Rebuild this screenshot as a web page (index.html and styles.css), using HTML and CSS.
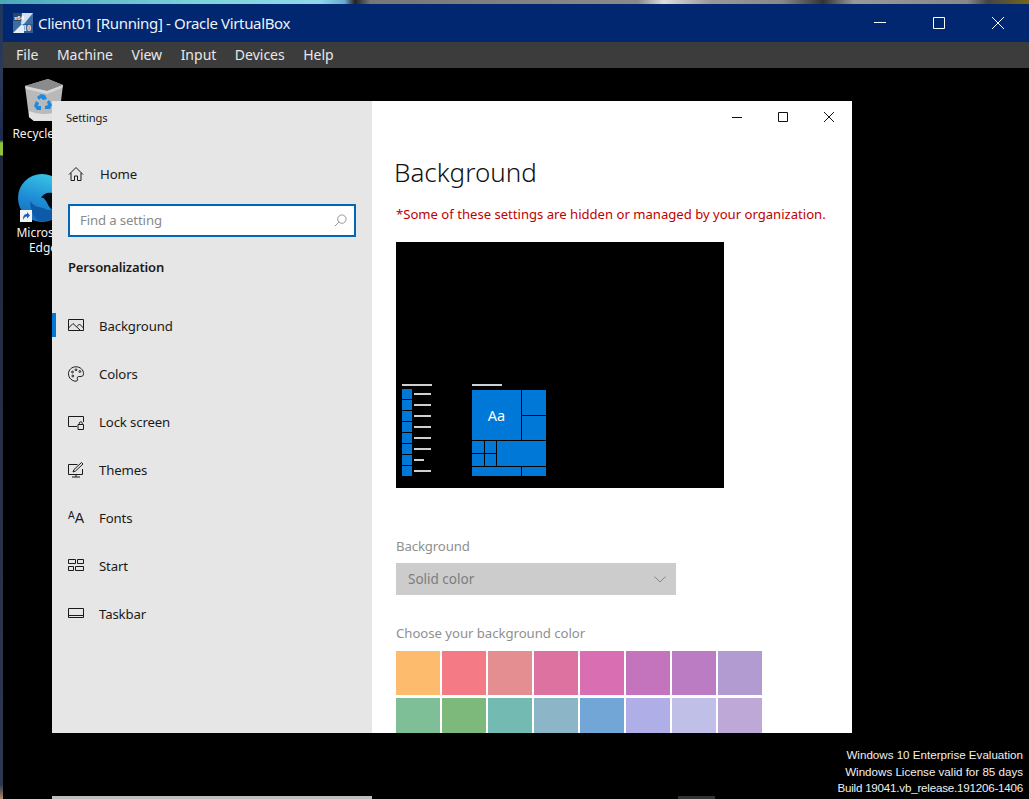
FILE: index.html
```html
<!DOCTYPE html>
<html lang="en">
<head>
<meta charset="utf-8">
<title>Client01 [Running] - Oracle VirtualBox</title>
<link rel="stylesheet" href="styles.css">
</head>
<body>
<div class="wall-top"></div>
<div class="vbox">
  <header class="vbox-title">
    <svg class="vbox-logo" viewBox="0 0 20 20">
      <rect width="20" height="20" fill="#3d6da3"/>
      <path d="M0 0h10v8H0z" fill="#27486e"/>
      <path d="M9 0h11L11 11H8z" fill="#cfe0f0"/>
      <path d="M0 20l9-9 3 3v6z" fill="#e4edf6"/>
      <path d="M11 11h9v9h-9z" fill="#2f5c92"/>
      <text x="1" y="7" class="vbox-logo-a">x64</text>
      <text x="10" y="18" class="vbox-logo-b">10</text>
    </svg>
    <span class="vbox-name">Client01 [Running] - Oracle VirtualBox</span>
    <div class="vbox-controls">
      <button class="vbox-btn" aria-label="Minimize"><svg viewBox="0 0 12 12"><path d="M0 5.500h12"/></svg></button>
      <button class="vbox-btn" aria-label="Maximize"><svg viewBox="0 0 12 12"><path d="M.5.500h11v11H.5z"/></svg></button>
      <button class="vbox-btn" aria-label="Close"><svg viewBox="0 0 12 12"><path d="M0 0l12 12M12 0L0 12"/></svg></button>
    </div>
  </header>
  <nav class="vbox-menu">
    <span>File</span><span>Machine</span><span>View</span><span>Input</span><span>Devices</span><span>Help</span>
  </nav>
  <main class="guest">
    <div class="desk-icon desk-recycle">
      <svg class="recycle-svg" viewBox="0 0 40 44">
        <path d="M1 8L24 1l15 6-4 32-6 4H10l-5-4z" fill="#b9b9b9"/>
        <path d="M1 8L24 1l15 6-16 6z" fill="#8b8b8b"/>
        <path d="M1 8l22 5 16-6-1 3-15 6L2 11z" fill="#d6d6d6"/>
        <path d="M5 33c10 4 20 4 31 0l-1 6-6 4H10l-5-4z" fill="#e2e2e2"/>
        <path d="M13 19l4-3 4 1 2 4-4 1-2-2-2 2zM25 22l3 5-2 4-5 0v-3l3-1-1-3zM12 23l3 2-1 3 3 0v4h-4l-3-4z" fill="#1d8ae0"/>
      </svg>
      <span class="desk-label">Recycle Bin</span>
    </div>
    <div class="desk-icon desk-edge">
      <svg class="edge-svg" viewBox="0 0 48 48">
        <defs>
          <linearGradient id="edgeA" x1="0.5" y1="0" x2="0.2" y2="1">
            <stop offset="0" stop-color="#36c0e4"/>
            <stop offset=".5" stop-color="#1f8ed6"/>
            <stop offset="1" stop-color="#1668b8"/>
          </linearGradient>
        </defs>
        <circle cx="24" cy="24" r="24" fill="url(#edgeA)"/>
        <path d="M12 27c4 6 9 6 13 7 4 2 7 3 9 1l8-6-4 14c-4 3-9 4-14 4-6 0-11-6-12-20z" fill="#0f5aa8"/>
        <path d="M23 24c2-4 6-6 11-5l8 4-8 12c-3-1-4-5-6-8-2-3-3-4-5-3z" fill="#040a14"/>
      </svg>
      <span class="shortcut"><svg viewBox="0 0 12 12"><path d="M3 10c0-4 1-6 4-6V2l3 3.500-3 3V6.500C5 6.500 4 8 3 10z"/></svg></span>
      <span class="desk-label">Microsoft Edge</span>
    </div>

    <section class="settings">
      <aside class="sidebar">
        <div class="settings-title">Settings</div>
        <a class="nav-row home-row">
          <svg class="ico" viewBox="0 0 16 16"><path d="M1 8.500L8 1.500l7 7M3 7v7.500h3.500V10h3v4.500H13V7"/></svg>
          <span>Home</span>
        </a>
        <div class="search">
          <span class="search-hint">Find a setting</span>
          <svg class="search-ico" viewBox="0 0 14 14"><circle cx="8.500" cy="5.500" r="4.500"/><path d="M5.300 8.700L.8 13.200"/></svg>
        </div>
        <h2 class="group">Personalization</h2>
        <a class="nav-row active">
          <svg class="ico" viewBox="0 0 16 16"><path d="M.5 1.500h15v11H.5zM.5 10l4.500-4.500 7.500 7M9 8.500l2.500-2.500 4 4"/></svg>
          <span>Background</span>
        </a>
        <a class="nav-row">
          <svg class="ico" viewBox="0 0 16 16"><path d="M8 .8c4.200 0 7.500 3 7.500 6.800 0 4.400-4.500 2-6 3.500-1.200 1.200 1 2.400-.3 3.600C8 15.800 5 15 3 13.300 1.300 11.800.5 9.800.5 7.800.5 3.800 3.800.8 8 .8z"/><circle cx="4.500" cy="6" r=".9"/><circle cx="8" cy="3.800" r=".9"/><circle cx="11.800" cy="5.500" r=".9"/><circle cx="4.800" cy="10" r=".9"/></svg>
          <span>Colors</span>
        </a>
        <a class="nav-row">
          <svg class="ico" viewBox="0 0 16 16"><path d="M9 12.500H.5v-10h15V8M10 10.500h5.500v5H10zM11.300 10.500V9.300a1.500 1.500 0 0 1 3 0v1.200"/></svg>
          <span>Lock screen</span>
        </a>
        <a class="nav-row">
          <svg class="ico" viewBox="0 0 16 16"><path d="M9.500 2.500H.5v10h14V7M4 15h8M8 12.500V15M5 10l1-2.500 7.500-7 1.500 1.500-7.500 7z"/></svg>
          <span>Themes</span>
        </a>
        <a class="nav-row">
          <span class="font-ico"><span class="font-a">A</span><span class="font-b">A</span></span>
          <span>Fonts</span>
        </a>
        <a class="nav-row">
          <svg class="ico" viewBox="0 0 16 16"><path d="M.5 1.500h7v4h-7zM9.500 1.500h6v4h-6zM.5 8.500h5v4h-5zM7.500 8.500h8v4h-8z"/></svg>
          <span>Start</span>
        </a>
        <a class="nav-row">
          <svg class="ico" viewBox="0 0 16 16"><path d="M.5 2.500h15v9H.5zM.5 9.500h15"/></svg>
          <span>Taskbar</span>
        </a>
      </aside>
      <div class="content">
        <div class="win-controls">
          <button class="win-btn" aria-label="Minimize"><svg viewBox="0 0 10 10"><path d="M0 5.500h10"/></svg></button>
          <button class="win-btn" aria-label="Maximize"><svg viewBox="0 0 10 10"><path d="M.5.500h9v9h-9z"/></svg></button>
          <button class="win-btn" aria-label="Close"><svg viewBox="0 0 10 10"><path d="M0 0l10 10M10 0L0 10"/></svg></button>
        </div>
        <h1 class="page-title">Background</h1>
        <p class="policy">*Some of these settings are hidden or managed by your organization.</p>
        <div class="preview">
          <div class="pv-start">
            <div class="pv-head"></div>
            <ul class="pv-list">
              <li><i></i><b></b></li><li><i></i><b></b></li><li><i></i><b></b></li><li><i></i><b></b></li>
              <li><i></i><b></b></li><li><i></i><b></b></li><li><i></i><b class="short"></b></li><li><i></i><b></b></li>
            </ul>
          </div>
          <div class="pv-tiles-col">
            <div class="pv-head"></div>
            <div class="pv-tiles">
              <div class="t-aa">Aa</div><div class="t-r1"></div><div class="t-r2"></div>
              <div class="t-s1"></div><div class="t-s2"></div><div class="t-m"></div>
              <div class="t-s3"></div><div class="t-s4"></div>
              <div class="t-b1"></div><div class="t-b2"></div>
            </div>
          </div>
        </div>
        <div class="field-label">Background</div>
        <div class="select">
          <span>Solid color</span>
          <svg class="chev" viewBox="0 0 12 7"><path d="M.5.500L6 6l5.500-5.500"/></svg>
        </div>
        <div class="field-label second">Choose your background color</div>
        <div class="swatches">
          <i class="c1"></i><i class="c2"></i><i class="c3"></i><i class="c4"></i><i class="c5"></i><i class="c6"></i><i class="c7"></i><i class="c8"></i>
          <i class="c9"></i><i class="c10"></i><i class="c11"></i><i class="c12"></i><i class="c13"></i><i class="c14"></i><i class="c15"></i><i class="c16"></i>
        </div>
      </div>
    </section>

    <div class="watermark">
      <div>Windows 10 Enterprise Evaluation</div>
      <div>Windows License valid for 85 days</div>
      <div class="wm-build">Build 19041.vb_release.191206-1406</div>
    </div>
    <div class="ghost-a"></div>
    <div class="ghost-b"></div>
  </main>
</div>
</body>
</html>
```

FILE: styles.css
```css
* { box-sizing: border-box; }
html, body { margin: 0; height: 100%; }
body {
  width: 1029px;
  height: 799px;
  overflow: hidden;
  display: flex;
  flex-direction: column;
  font-family: "Noto Sans", "Open Sans", sans-serif;
  background: linear-gradient(180deg, #1d3560 0, #2b3a55 68px, #1b2b50 140px, #8fc23a 143px, #8fc23a 155px, #20283c 156px, #2c3850 760px, #2c3850 785px, #b08a6a 799px);
}
.wall-top {
  height: 4px;
  flex: none;
  background: linear-gradient(90deg, #4aa8b8 0, #7fd3dc 20%, #8fd8ea 31%, #6aa8cc 33.500%, #222 34.500%, #777 36%, #8a8a8a 62%, #ddd 64.500%, #999 69%, #888 76%, #333 80%, #999 83%, #888 94%, #444 96%, #77661a 100%);
}
.vbox {
  flex: 1;
  min-height: 0;
  margin-left: 3px;
  display: flex;
  flex-direction: column;
}
.vbox-title {
  height: 38px;
  flex: none;
  display: flex;
  align-items: center;
  background: #00276f;
  color: #fff;
  padding-left: 10px;
}
.vbox-logo { width: 20px; height: 20px; margin-right: 5px; }
.vbox-logo-a { font: bold 6px "Liberation Sans", sans-serif; fill: #fff; }
.vbox-logo-b { font: bold 8px "Liberation Serif", serif; fill: #fff; }
.vbox-name { font-size: 15px; letter-spacing: -.35px; white-space: nowrap; color: #eef2f8; }
.vbox-controls { margin-left: auto; display: flex; padding-right: 2px; }
.vbox-btn {
  width: 59px;
  height: 38px;
  padding: 0;
  border: 0;
  background: none;
  display: flex;
  align-items: center;
  justify-content: center;
}
.vbox-btn svg { width: 12px; height: 12px; fill: none; stroke: #fff; stroke-width: 1; }
.vbox-menu {
  height: 26px;
  flex: none;
  display: flex;
  align-items: center;
  gap: 18.500px;
  padding: 0 0 2px 13px;
  background: #3c3c3c;
  color: #e8e8e8;
  font-size: 14px;
}
.guest { flex: 1; position: relative; background: #000; overflow: hidden; }

.desk-icon {
  position: absolute;
  width: 76px;
  display: flex;
  flex-direction: column;
  align-items: center;
  color: #f2f2f2;
  font-size: 12px;
  line-height: 15px;
  text-align: center;
}
.desk-recycle { left: 3px; top: 10px; }
.recycle-svg { width: 40px; height: 44px; margin-left: 0; margin-bottom: 4px; }
.desk-edge { left: 2px; top: 106px; }
.edge-svg { width: 48px; height: 48px; margin: 0 0 3px -2px; }
.desk-edge .desk-label { width: 60px; }
.shortcut {
  position: absolute;
  left: 15px;
  top: 36px;
  width: 12px;
  height: 12px;
  background: #f4f4f4;
}
.shortcut svg { display: block; fill: #1c5fc0; }

.settings {
  position: absolute;
  left: 49px;
  top: 33px;
  width: 800px;
  height: 632px;
  display: flex;
  overflow: hidden;
  font-size: 13.200px;
  letter-spacing: -.13px;
  color: #1a1a1a;
}
.sidebar { width: 320px; flex: none; background: #e6e6e6; }
.settings-title { height: 32px; padding-left: 14px; font-size: 11.200px; line-height: 33px; }
.nav-row {
  position: relative;
  height: 48px;
  display: flex;
  align-items: center;
  padding-left: 16px;
}
.nav-row .ico {
  width: 16px;
  height: 16px;
  margin-right: 15px;
  fill: none;
  stroke: #1a1a1a;
  stroke-width: 1;
  flex: none;
}
.home-row { margin-top: 17px; }
.home-row .ico { margin-right: 16px; }
.active::before {
  content: "";
  position: absolute;
  left: 0;
  top: 11px;
  width: 4px;
  height: 24px;
  background: #0078d7;
}
.search {
  height: 33px;
  margin: 6px 16px 0;
  padding: 0 7px 2px 10px;
  border: 2px solid #0067b8;
  background: #fff;
  display: flex;
  align-items: center;
  justify-content: space-between;
  color: #8a8a8a;
}
.search-ico { width: 13px; height: 13px; margin-top: 2px; fill: none; stroke: #8f8f8f; stroke-width: 1; }
.group { margin: 20px 16px 25px; font-size: 13px; line-height: 20px; font-weight: 600; }
.font-ico {
  width: 16px;
  margin-right: 15px;
  display: flex;
  align-items: flex-end;
  justify-content: center;
  font-family: "Liberation Sans", sans-serif;
  letter-spacing: 0;
  line-height: 1;
}
.font-a { font-size: 10px; margin-bottom: 4px; }
.font-b { font-size: 14px; }

.content { flex: 1; min-width: 0; background: #fff; padding-left: 24px; }
.win-controls { display: flex; justify-content: flex-end; height: 32px; }
.win-btn {
  width: 46px;
  height: 32px;
  padding: 0;
  border: 0;
  background: none;
  display: flex;
  align-items: center;
  justify-content: center;
}
.win-btn svg { width: 10px; height: 10px; fill: none; stroke: #111; stroke-width: 1; }
.page-title {
  margin: 18px 0 0 -2px;
  font-size: 26px;
  font-weight: 300;
  letter-spacing: 0;
  line-height: 42px;
  color: #111;
}
.policy { margin: 11px 0 0; font-size: 13.100px; letter-spacing: 0; line-height: 20px; color: #c00000; white-space: nowrap; }
.preview {
  width: 328px;
  height: 246px;
  margin-top: 18px;
  background: #000;
  display: flex;
  align-items: flex-end;
  padding: 0 0 12px 6px;
}
.pv-head { height: 2px; width: 30px; background: #d0d0d0; margin-bottom: 4px; }
.pv-start { width: 70px; }
.pv-start .pv-head { margin-bottom: 3px; }
.pv-list { list-style: none; margin: 0; padding: 0; }
.pv-list li { display: flex; align-items: center; height: 11px; padding-bottom: 1px; }
.pv-list li:last-child { height: 10px; padding-bottom: 0; }
.pv-list i { width: 10px; height: 10px; background: #0078d7; margin-right: 2px; }
.pv-list b { width: 17px; height: 2px; background: #d0d0d0; }
.pv-list b.short { width: 10px; }
.pv-tiles {
  width: 74px;
  display: grid;
  grid-template-columns: 12px 11px 24px 24px;
  grid-template-rows: 25px 24px 12px 12px 9px;
  gap: 1px;
}
.pv-tiles div { background: #0078d7; }
.t-aa {
  grid-column: 1 / 4;
  grid-row: 1 / 3;
  display: flex;
  align-items: center;
  justify-content: center;
  color: #fff;
  font-size: 14.500px;
  letter-spacing: 0;
}
.t-r1 { grid-column: 4; grid-row: 1; }
.t-r2 { grid-column: 4; grid-row: 2; }
.t-s1 { grid-column: 1; grid-row: 3; }
.t-s2 { grid-column: 2; grid-row: 3; }
.t-m { grid-column: 3 / 5; grid-row: 3 / 5; }
.t-s3 { grid-column: 1; grid-row: 4; }
.t-s4 { grid-column: 2; grid-row: 4; }
.t-b1 { grid-column: 1 / 4; grid-row: 5; }
.t-b2 { grid-column: 4; grid-row: 5; }
.field-label { margin-top: 48px; line-height: 20px; color: #8f8f8f; }
.field-label.second { margin-top: 28px; letter-spacing: -.05px; }
.select {
  width: 280px;
  height: 32px;
  margin-top: 7px;
  padding: 0 10px 0 12px;
  background: #cccccc;
  color: #7d7d7d;
  font-size: 13.500px;
  letter-spacing: 0;
  display: flex;
  align-items: center;
  justify-content: space-between;
}
.chev { width: 12px; height: 7px; fill: none; stroke: #858585; stroke-width: 1; }
.swatches {
  width: 366px;
  margin-top: 8px;
  display: grid;
  grid-template-columns: repeat(8, 44px);
  grid-auto-rows: 44px;
  column-gap: 2px;
  row-gap: 3px;
}
.c1 { background: #fdbb6e; }
.c2 { background: #f47a86; }
.c3 { background: #e48e92; }
.c4 { background: #dd719f; }
.c5 { background: #d96fb2; }
.c6 { background: #c473bd; }
.c7 { background: #bb7cc4; }
.c8 { background: #b29bd0; }
.c9 { background: #7fbf97; }
.c10 { background: #7eb97c; }
.c11 { background: #73bab2; }
.c12 { background: #8db5c8; }
.c13 { background: #72a6d6; }
.c14 { background: #afaee6; }
.c15 { background: #c0bfe8; }
.c16 { background: #bda8d8; }

.watermark {
  position: absolute;
  right: 6px;
  top: 679px;
  color: #f0f0f0;
  font-family: "Liberation Sans", sans-serif;
  font-size: 11.600px;
  line-height: 16.500px;
  text-align: right;
  white-space: nowrap;
}
.wm-build { letter-spacing: -.21px; }
.ghost-a { position: absolute; left: 49px; top: 728px; width: 320px; height: 3px; background: #bdbdbd; }
.ghost-b { position: absolute; left: 675px; top: 728px; width: 37px; height: 3px; background: #333; }
```
